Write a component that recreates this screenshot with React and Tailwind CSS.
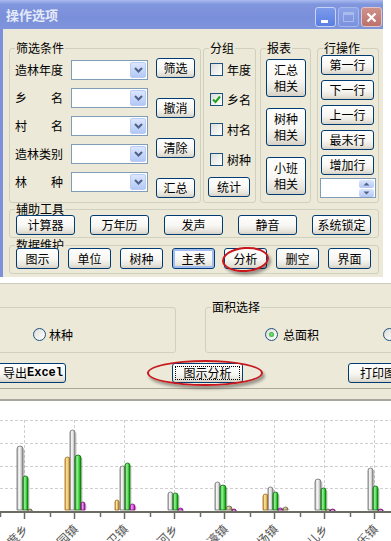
import React from 'react';

const Btn = ({ children, className = '' }) => (
  <div
    className={
      'flex shrink-0 items-center justify-center rounded-[3px] border border-[#003C74] bg-[linear-gradient(180deg,#FFFFFF_0%,#F7F6F2_55%,#E6E3DA_85%,#D6D0C5_100%)] text-[12px] leading-[14px] text-black ' +
      className
    }
  >
    {children}
  </div>
);

const Combo = () => (
  <div className="flex h-[20px] w-[77px] items-center justify-end border border-[#7F9DB9] bg-white pr-[1px]">
    <div className="flex h-[16px] w-[16px] items-center justify-center rounded-[2px] border border-[#BACBF4] bg-[linear-gradient(180deg,#DCE6FD,#B4C8F5)]">
      <svg width="9" height="6" viewBox="0 0 9 6">
        <path d="M1 1 L4.5 4.5 L8 1" fill="none" stroke="#4D6185" strokeWidth="2" />
      </svg>
    </div>
  </div>
);

const Check = ({ checked }) => (
  <div className="flex h-[13px] w-[13px] shrink-0 items-center justify-center border border-[#1C5180] bg-[linear-gradient(135deg,#DCDCD7,#FFFFFF)]">
    {checked && (
      <svg width="9" height="9" viewBox="0 0 9 9">
        <path d="M1 4.5 L3.5 7 L8 1.5" fill="none" stroke="#21A121" strokeWidth="2" />
      </svg>
    )}
  </div>
);

const Radio = ({ checked }) => (
  <div className="flex h-[13px] w-[13px] shrink-0 items-center justify-center rounded-full border border-[#1C5180] bg-[linear-gradient(135deg,#DCDCD7,#FFFFFF)]">
    {checked && <div className="h-[5px] w-[5px] rounded-full bg-[radial-gradient(circle,#7BEA7B,#1E9E1E)]" />}
  </div>
);

const Group = ({ label, className = '', children }) => (
  <div className={'relative shrink-0 rounded-[3px] border border-[#D0D0BF] ' + className}>
    {label && (
      <span className="absolute -top-[7px] left-[5px] bg-[#ECE9D8] px-[1px] text-[12px] leading-[12px] text-black">
        {label}
      </span>
    )}
    {children}
  </div>
);

const filters = [
  ['造林年度'],
  ['乡', '名'],
  ['村', '名'],
  ['造林类别'],
  ['林', '种'],
];

const bars = [
  ['gray', 17, 6, 446], ['green', 23, 5, 476], ['olive', 28, 4, 509],
  ['orange', 65, 5, 457], ['gray', 70, 5, 430], ['green', 75, 6, 455], ['mag', 81, 4, 502],
  ['orange', 115, 4, 500], ['gray', 120, 5, 466], ['green', 125, 5, 463], ['mag', 130, 5, 504],
  ['gray', 168, 5, 492], ['green', 173, 5, 493], ['mag', 178, 5, 508],
  ['gray', 215, 5, 482], ['green', 220, 6, 485], ['olive', 226, 6, 506], ['mag', 232, 4, 509],
  ['orange', 263, 5, 494], ['gray', 268, 5, 487], ['green', 273, 5, 492], ['mag', 278, 5, 508], ['olive', 283, 5, 507],
  ['gray', 315, 6, 479], ['green', 321, 5, 488], ['olive', 326, 4, 509], ['mag', 330, 5, 509],
  ['gray', 368, 5, 468], ['green', 373, 5, 486], ['mag', 378, 5, 509],
];

const palette = {
  gray: ['#A0A0A0', '#FFFFFF', '#CFCFCF', '#8A8A8A', '#6E6E6E'],
  green: ['#1FA01F', '#9CF59C', '#33CC33', '#138013', '#0E6A0E'],
  orange: ['#D49530', '#FFE6A8', '#E9B24C', '#B07820', '#9A6A1A'],
  mag: ['#B020B0', '#F59CF5', '#D444D4', '#901090', '#7A107A'],
  olive: ['#948A5A', '#E4DDB8', '#B4AC7C', '#7E7648', '#6A6440'],
};

const labels = ['新度乡', '吉园镇', '前卫镇', '白河乡', '大濠镇', '东场镇', '和儿乡', '永乐镇'];

const Chart = () => {
  const base = 109;
  return (
    <svg width="391" height="140" viewBox="0 0 391 140" className="block">
      <defs>
        {Object.entries(palette).map(([k, c]) => (
          <linearGradient key={k} id={'g-' + k} x1="0" x2="1" y1="0" y2="0">
            <stop offset="0" stopColor={c[0]} />
            <stop offset="0.35" stopColor={c[1]} />
            <stop offset="0.7" stopColor={c[2]} />
            <stop offset="1" stopColor={c[3]} />
          </linearGradient>
        ))}
      </defs>
      <rect width="391" height="140" fill="#FFFFFF" />
      {[19, 42, 65, 87].map((y) => (
        <line key={y} x1="0" x2="391" y1={y + 0.5} y2={y + 0.5} stroke="#CFCFCF" strokeDasharray="3 2" />
      ))}
      {[0, 1, 2, 3, 4, 5, 6, 7].map((k) => (
        <line key={k} x1={24.5 + 50 * k} x2={24.5 + 50 * k} y1="19" y2={base} stroke="#CFCFCF" strokeDasharray="3 2" />
      ))}
      {bars.map(([c, x, w, top], i) => {
        const t = top - 401;
        const r = w / 2;
        const d = `M${x} ${base} V${t + r} A${r} ${r} 0 0 1 ${x + w} ${t + r} V${base} Z`;
        return (
          <g key={i}>
            <rect x={x + 2} y={t + 2} width={w} height={base - t - 2} fill="rgba(0,0,0,0.10)" rx={r} />
            <path d={d} fill={`url(#g-${c})`} stroke={palette[c][4]} strokeWidth="0.8" />
          </g>
        );
      })}
      <line x1="0" x2="391" y1="111" y2="111" stroke="#6E6C62" strokeWidth="2" />
      {[0, 1, 2, 3, 4, 5, 6, 7, 8].map((k) => (
        <line key={'m' + k} x1={0.5 + 50 * k} x2={0.5 + 50 * k} y1="111" y2="116" stroke="#6E6C62" strokeWidth="1.5" />
      ))}
      {[0, 1, 2, 3, 4, 5, 6, 7].map((k) => (
        <line key={'M' + k} x1={24.5 + 50 * k} x2={24.5 + 50 * k} y1="111" y2="118" stroke="#6E6C62" strokeWidth="1.5" />
      ))}
      {labels.map((l, k) => {
        const x = 29 + 50 * k;
        const y = 129;
        return (
          <text
            key={l}
            x={x}
            y={y}
            textAnchor="end"
            fontSize="12"
            fill="#555555"
            fontFamily="'Noto Sans CJK SC', sans-serif"
            transform={`rotate(-45 ${x} ${y})`}
          >
            {l}
          </text>
        );
      })}
    </svg>
  );
};

export default function App() {
  return (
    <div className="w-[391px] h-[541px] overflow-hidden bg-white font-['Noto_Sans_CJK_SC','Liberation_Sans',sans-serif] text-[12px] text-black">
      {/* dialog */}
      <div className="flex h-[277px] w-[383px] flex-col">
        <div className="flex h-[29px] shrink-0 items-start bg-[linear-gradient(180deg,#A9BBEF_0%,#8096DD_15%,#7A8FDA_60%,#7E94DC_100%)]">
          <span className="ml-[6px] mt-[7px] text-[13px] font-bold leading-[15px] text-[#E4EAF9]">操作选项</span>
          <div className="ml-auto mr-[1px] mt-[7px] flex gap-[2px]">
            <div className="flex h-[20px] w-[21px] items-end justify-start rounded-[3px] border border-[#C6D3F5] bg-[linear-gradient(180deg,#7C9BEB,#5A7EE3)] pb-[3px] pl-[5px]">
              <div className="h-[3px] w-[7px] bg-white" />
            </div>
            <div className="flex h-[20px] w-[21px] items-center justify-center rounded-[3px] border border-[#A6B7EA] bg-[linear-gradient(180deg,#8DA3E6,#7A92DF)]">
              <div className="h-[10px] w-[11px] border border-t-[3px] border-[#A9BAEC]" />
            </div>
            <div className="flex h-[20px] w-[21px] items-center justify-center rounded-[3px] border border-[#E2C4C4] bg-[linear-gradient(180deg,#CF918B,#BC716B)]">
              <svg width="11" height="11" viewBox="0 0 11 11">
                <path d="M1.5 1.5 L9.5 9.5 M9.5 1.5 L1.5 9.5" stroke="#FFFFFF" strokeWidth="2.2" />
              </svg>
            </div>
          </div>
        </div>

        <div className="flex flex-1 flex-col border-l-[3px] border-[#7C90DC] bg-[#ECE9D8]">
          <div className="ml-[6px] mt-[19px] flex">
            <Group label="筛选条件" className="h-[155px] w-[192px]">
              <div className="flex pl-[5px]">
                <div className="mt-[11px] flex flex-col gap-[8px]">
                  {filters.map((f, i) => (
                    <div key={i} className="flex h-[20px] items-center">
                      <div className="flex w-[48px] justify-between leading-[14px]">
                        {f.map((s) => (
                          <span key={s}>{s}</span>
                        ))}
                      </div>
                      <div className="ml-[8px]">
                        <Combo />
                      </div>
                    </div>
                  ))}
                </div>
                <div className="ml-[8px] mt-[9px] flex flex-col gap-[20px]">
                  {['筛选', '撤消', '清除', '汇总'].map((b) => (
                    <Btn key={b} className="h-[20px] w-[39px]">
                      {b}
                    </Btn>
                  ))}
                </div>
              </div>
            </Group>

            <Group label="分组" className="ml-[2px] h-[155px] w-[53px]">
              <div className="flex flex-col pl-[6px] pt-[14px]">
                <div className="flex flex-col gap-[17px]">
                  {[
                    ['年度', false],
                    ['乡名', true],
                    ['村名', false],
                    ['树种', false],
                  ].map(([t, c]) => (
                    <div key={t} className="flex h-[13px] items-center gap-[4px] leading-[13px]">
                      <Check checked={c} />
                      <span>{t}</span>
                    </div>
                  ))}
                </div>
                <Btn className="-ml-[2px] mt-[11px] h-[20px] w-[42px]">统计</Btn>
              </div>
            </Group>

            <Group label="报表" className="ml-[4px] h-[155px] w-[51px]">
              <div className="flex flex-col gap-[11px] pl-[5px] pt-[10px]">
                {[
                  ['汇总', '相关'],
                  ['树种', '相关'],
                  ['小班', '相关'],
                ].map(([a, b]) => (
                  <Btn key={a} className="h-[38px] w-[40px] flex-col">
                    <span className="leading-[16px]">{a}</span>
                    <span className="leading-[16px]">{b}</span>
                  </Btn>
                ))}
              </div>
            </Group>

            <Group label="行操作" className="ml-[6px] h-[155px] w-[62px]">
              <div className="flex flex-col pl-[3px] pt-[6px]">
                <div className="flex flex-col gap-[5px]">
                  {['第一行', '下一行', '上一行', '最末行', '增加行'].map((b) => (
                    <Btn key={b} className="h-[20px] w-[53px]">
                      {b}
                    </Btn>
                  ))}
                </div>
                <div className="-ml-[1px] mt-[3px] flex h-[20px] w-[56px] items-center justify-end border border-[#7F9DB9] bg-white pr-[1px]">
                  <div className="flex flex-col gap-[1px]">
                    <div className="flex h-[8px] w-[15px] items-center justify-center rounded-[2px] bg-[linear-gradient(180deg,#DCE6FD,#B4C8F5)]">
                      <svg width="7" height="4" viewBox="0 0 7 4">
                        <path d="M0.5 3.5 L3.5 0.5 L6.5 3.5 Z" fill="#4D6185" />
                      </svg>
                    </div>
                    <div className="flex h-[8px] w-[15px] items-center justify-center rounded-[2px] bg-[linear-gradient(180deg,#DCE6FD,#B4C8F5)]">
                      <svg width="7" height="4" viewBox="0 0 7 4">
                        <path d="M0.5 0.5 L3.5 3.5 L6.5 0.5 Z" fill="#4D6185" />
                      </svg>
                    </div>
                  </div>
                </div>
              </div>
            </Group>
          </div>

          <Group label="辅助工具" className="ml-[6px] mt-[6px] h-[29px] w-[370px]">
            <div className="relative flex gap-[15px] pl-[6px] pt-[5px]">
              {['计算器', '万年历', '发声', '静音', '系统锁定'].map((b) => (
                <Btn key={b} className="h-[20px] w-[59px]">
                  {b}
                </Btn>
              ))}
            </div>
          </Group>

          <Group label="数据维护" className="ml-[6px] mt-[7px] h-[29px] w-[370px]">
            <div className="relative flex gap-[9px] pl-[6px] pt-[2px]">
              {['图示', '单位', '树种', '主表', '分析', '删空', '界面'].map((b) => (
                <Btn
                  key={b}
                  className={
                    'h-[21px] w-[43px] ' + (b === '主表' ? 'shadow-[inset_0_0_0_2px_#A3BDF0]' : '')
                  }
                >
                  {b}
                </Btn>
              ))}
              <div className="absolute left-[212px] top-[1px] h-[25px] w-[47px] -rotate-[4deg] rounded-[50%] border-2 border-[#C8181E] shadow-[2px_3px_3px_rgba(0,0,0,0.35)]" />
            </div>
          </Group>
        </div>
      </div>

      <div className="h-[6px] bg-white" />

      {/* lower window */}
      <div className="flex h-[116px] flex-col overflow-hidden border-t border-[#CFCCBE] bg-[#ECE9D8]">
        <div className="mt-[23px] flex">
          <Group className="-ml-[30px] h-[46px] w-[206px]">
            <div className="flex items-center pl-[62px] pt-[20px] leading-[13px]">
              <Radio />
              <span className="ml-[3px]">林种</span>
            </div>
          </Group>
          <Group label="面积选择" className="ml-[29px] h-[46px] w-[230px]">
            <div className="flex items-center pl-[59px] pt-[20px] leading-[13px]">
              <Radio checked />
              <span className="ml-[5px]">总面积</span>
              <div className="ml-[64px]">
                <Radio />
              </div>
            </div>
          </Group>
        </div>
        <div className="relative mt-[10px] flex h-[20px] shrink-0">
          <Btn className="-ml-[6px] h-[20px] w-[72px] justify-start pl-[8px]">
            导出<span className="font-['Liberation_Mono',monospace] text-[12px] font-bold">Excel</span>
          </Btn>
          <Btn className="relative ml-[106px] h-[20px] w-[71px]">
            <div className="absolute inset-[2px] border border-dotted border-black" />
            图示分析
          </Btn>
          <Btn className="ml-[105px] h-[20px] w-[75px] justify-start pl-[11px]">打印图表</Btn>
          <div className="absolute left-[147px] -top-[3px] h-[26px] w-[116px] rounded-[50%] border-2 border-[#C8181E] shadow-[2px_3px_3px_rgba(0,0,0,0.35)]" />
        </div>
        <div className="mt-[5px] h-[1px] shrink-0 bg-[#ACA899]" />
      </div>
      <div className="h-[2px] bg-[#A7A6A0]" />
      <Chart />
    </div>
  );
}
